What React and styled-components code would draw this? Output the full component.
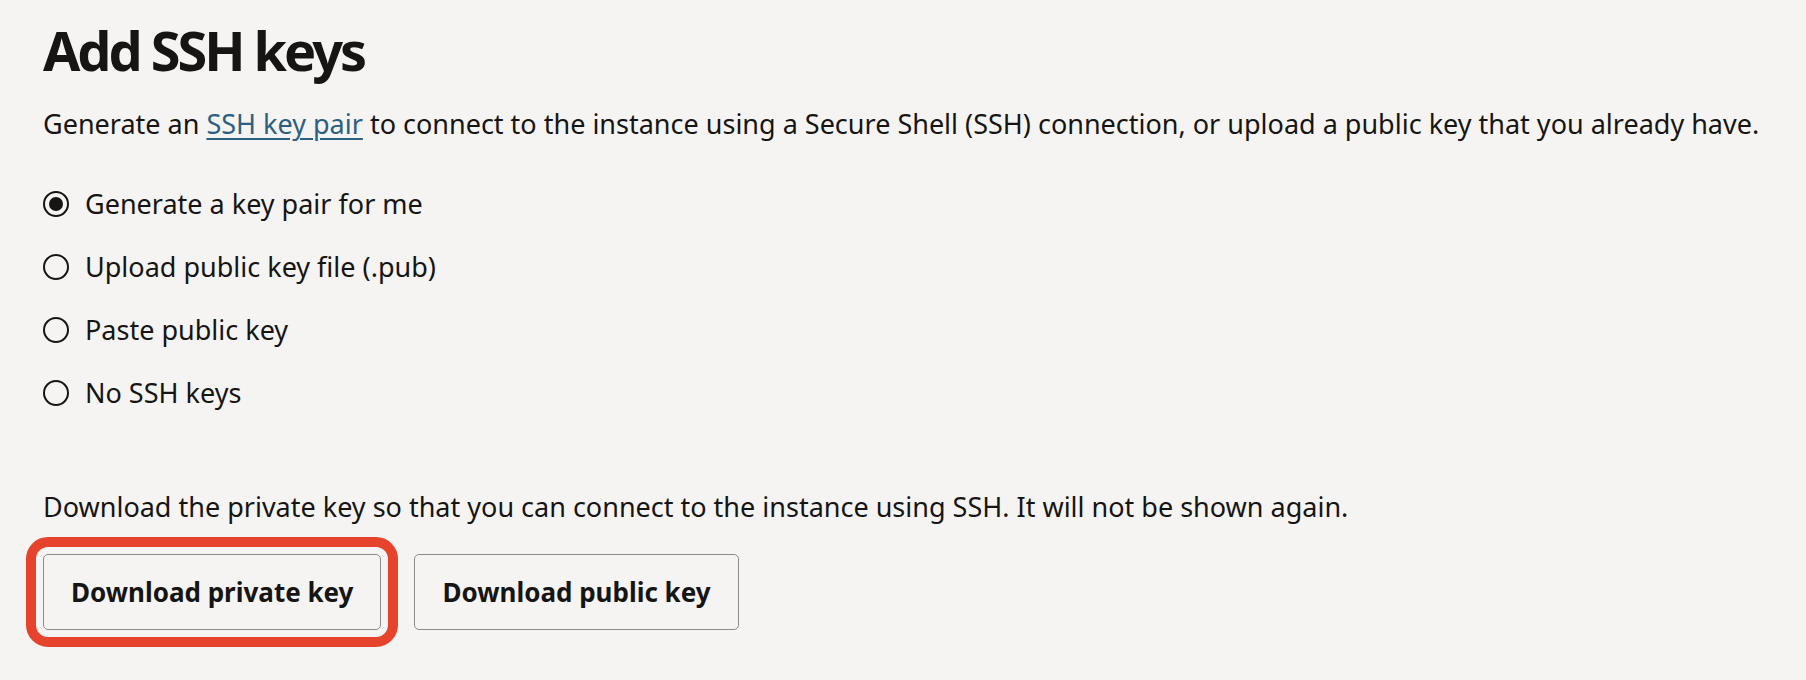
import React from "react";
import styled, { createGlobalStyle } from "styled-components";

const Global = createGlobalStyle`
  html, body {
    margin: 0;
    background: #f5f4f2;
  }
  body {
    font-family: "Noto Sans", "Open Sans", sans-serif;
    color: #161513;
  }
`;

const Page = styled.div`
  width: 1806px;
  height: 680px;
  box-sizing: border-box;
  padding: 14px 43px 0;
  background: #f5f4f2;
  overflow: hidden;
`;

const Title = styled.h1`
  margin: 0;
  font-size: 54px;
  font-weight: 700;
  letter-spacing: -3px;
  line-height: 72px;
`;

const Text = styled.p`
  margin: ${(p) => p.$top || 0}px 0 0;
  font-size: 27px;
  line-height: 36px;
`;

const Link = styled.a`
  color: #2c6080;
  text-decoration: underline;
  text-underline-offset: 4px;
  text-decoration-thickness: 2px;
`;

const RadioList = styled.div`
  display: flex;
  flex-direction: column;
  gap: 27px;
  margin-top: 44px;
`;

const RadioRow = styled.label`
  display: flex;
  align-items: center;
  gap: 16px;
  font-size: 27px;
  line-height: 36px;
`;

const Circle = styled.span`
  width: 26px;
  height: 26px;
  box-sizing: border-box;
  border: 2px solid #161513;
  border-radius: 50%;
  display: flex;
  align-items: center;
  justify-content: center;
  &::after {
    content: "";
    width: 14px;
    height: 14px;
    border-radius: 50%;
    background: #161513;
    display: ${(p) => (p.$checked ? "block" : "none")};
  }
`;

const Actions = styled.div`
  display: flex;
  align-items: center;
  gap: 16px;
  margin-top: 29px;
`;

const Highlight = styled.div`
  margin: -17px 0 -17px -17px;
  padding: 7px;
  border: 10px solid #e5432b;
  border-radius: 22px;
`;

const Button = styled.button`
  height: 76px;
  padding: 0 ${(p) => p.$pad}px;
  background: #f5f4f2;
  border: 1.5px solid #8b8b8b;
  border-radius: 5px;
  font-family: "Noto Sans", "Open Sans", sans-serif;
  font-size: 26px;
  font-weight: 700;
  color: #161513;
  cursor: pointer;
`;

const options = [
  "Generate a key pair for me",
  "Upload public key file (.pub)",
  "Paste public key",
  "No SSH keys",
];

export default function App() {
  return (
    <Page>
      <Global />
      <Title>Add SSH keys</Title>
      <Text $top={20}>
        Generate an <Link href="#">SSH key pair</Link> to connect to the
        instance using a Secure Shell (SSH) connection, or upload a public key
        that you already have.
      </Text>
      <RadioList>
        {options.map((o, i) => (
          <RadioRow key={o}>
            <Circle $checked={i === 0} />
            {o}
          </RadioRow>
        ))}
      </RadioList>
      <Text $top={78}>
        Download the private key so that you can connect to the instance using
        SSH. It will not be shown again.
      </Text>
      <Actions>
        <Highlight>
          <Button $pad={27}>Download private key</Button>
        </Highlight>
        <Button $pad={27}>Download public key</Button>
      </Actions>
    </Page>
  );
}
